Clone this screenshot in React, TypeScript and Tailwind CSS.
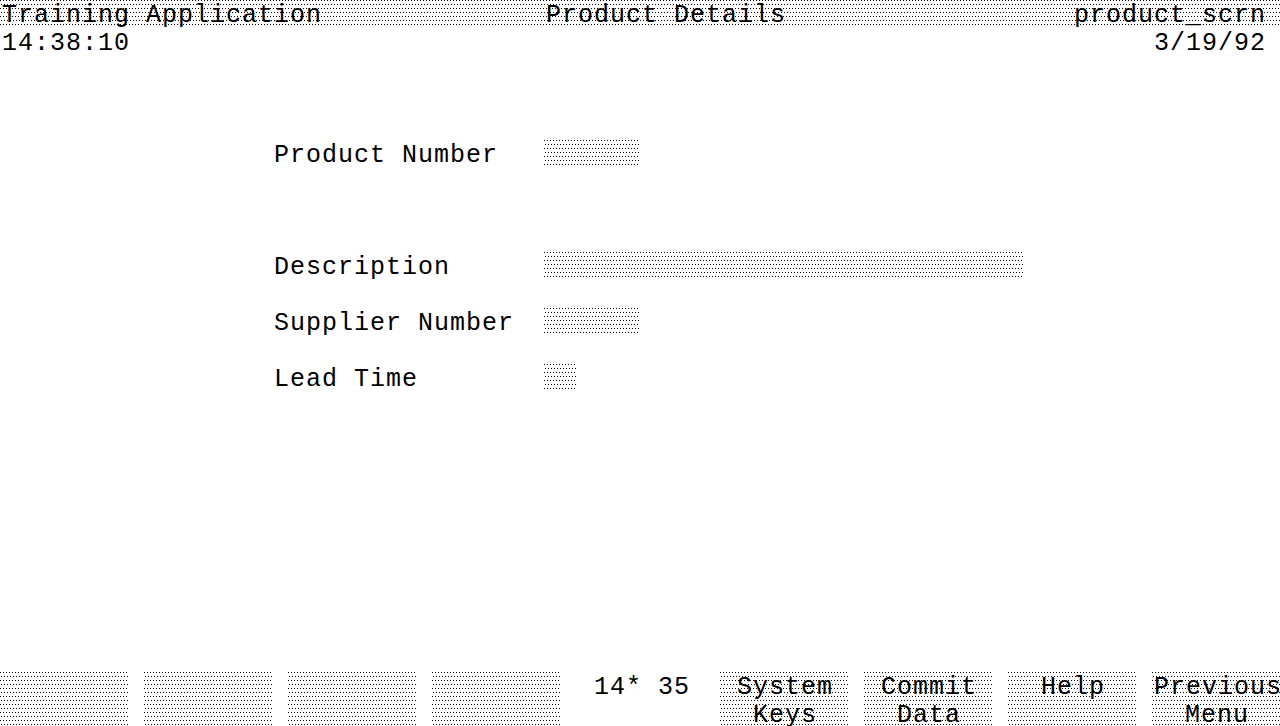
import React from "react";

const pat =
  "bg-[image:conic-gradient(at_1px_1px,transparent_75%,#000_0),conic-gradient(at_1px_1px,transparent_75%,#000_0)] bg-[length:3px_8px] bg-[position:0_0,1px_4px]";

const txt = "whitespace-pre leading-[32px] h-[28px] tracking-[1px] pl-[2px]";
const keyTxt = "whitespace-pre leading-[32px] h-[28px] tracking-[1px] text-center pl-[2px]";

export default function App() {
  return (
    <div
      className="w-[1280px] h-[726px] overflow-hidden bg-white text-black text-[25px]"
      style={{ fontFamily: '"Liberation Mono", "DejaVu Sans Mono", monospace' }}
    >
      <div className="grid grid-cols-[repeat(80,16px)] grid-rows-[repeat(26,28px)]">
        {/* header band */}
        <div className={`col-[1/-1] row-[1] ${pat}`} />
        <div className={`col-[1/span_20] row-[1] ${txt}`}>Training Application</div>
        <div className={`col-[35/span_15] row-[1] ${txt}`}>Product Details</div>
        <div className={`col-[68/span_12] row-[1] ${txt}`}>product_scrn</div>
        <div className={`col-[1/span_8] row-[2] ${txt}`}>14:38:10</div>
        <div className={`col-[73/span_7] row-[2] ${txt}`}>3/19/92</div>

        {/* form */}
        <div className={`col-[18/span_14] row-[6] ${txt}`}>Product Number</div>
        <div className={`col-[35/span_6] row-[6] h-[26px] ${pat}`} />

        <div className={`col-[18/span_11] row-[10] ${txt}`}>Description</div>
        <div className={`col-[35/span_30] row-[10] h-[26px] ${pat}`} />

        <div className={`col-[18/span_15] row-[12] ${txt}`}>Supplier Number</div>
        <div className={`col-[35/span_6] row-[12] h-[26px] ${pat}`} />

        <div className={`col-[18/span_9] row-[14] ${txt}`}>Lead Time</div>
        <div className={`col-[35/span_2] row-[14] h-[26px] ${pat}`} />

        {/* soft keys */}
        <div className={`col-[1/span_8] row-[25/span_2] ${pat}`} />
        <div className={`col-[10/span_8] row-[25/span_2] ${pat}`} />
        <div className={`col-[19/span_8] row-[25/span_2] ${pat}`} />
        <div className={`col-[28/span_8] row-[25/span_2] ${pat}`} />
        <div className={`col-[38/span_6] row-[25] ${txt}`}>14* 35</div>
        {[
          ["46", "System", "Keys"],
          ["55", "Commit", "Data"],
          ["64", "Help", ""],
          ["73", "Previous", "Menu"],
        ].map(([c, a, b]) => (
          <div
            key={c}
            className={`row-[25/span_2] ${pat} flex flex-col ${
              c === "46"
                ? "col-[46/span_8]"
                : c === "55"
                ? "col-[55/span_8]"
                : c === "64"
                ? "col-[64/span_8]"
                : "col-[73/span_8]"
            }`}
          >
            <div className={keyTxt}>{a}</div>
            <div className={keyTxt}>{b}</div>
          </div>
        ))}
      </div>
    </div>
  );
}
